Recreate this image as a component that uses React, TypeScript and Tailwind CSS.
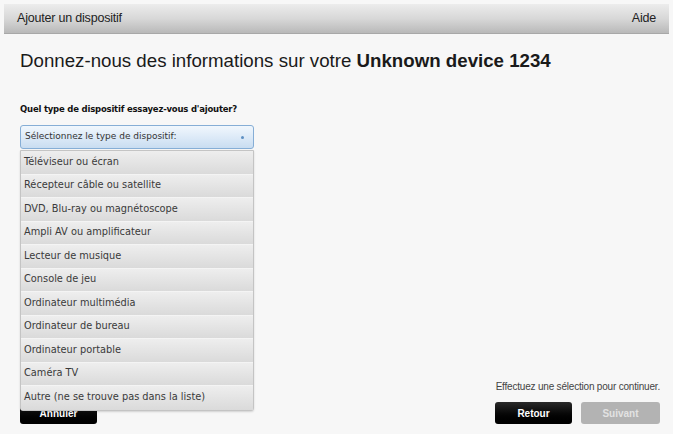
import React from "react";

const items = [
  "Téléviseur ou écran",
  "Récepteur câble ou satellite",
  "DVD, Blu-ray ou magnétoscope",
  "Ampli AV ou amplificateur",
  "Lecteur de musique",
  "Console de jeu",
  "Ordinateur multimédia",
  "Ordinateur de bureau",
  "Ordinateur portable",
  "Caméra TV",
  "Autre (ne se trouve pas dans la liste)",
];

export default function App() {
  return (
    <div className="w-[673px] h-[434px] bg-[#f7f7f7] flex flex-col font-['Liberation_Sans',Arial,sans-serif] text-[#222] overflow-hidden">
      <div className="mx-[4px] mt-[4px] h-[30px] flex items-center justify-between pl-[13px] pr-[13px] bg-gradient-to-b from-[#ececec] via-[#d8d8d8] to-[#b9b9b9] border-b border-[#a8a8a8] text-[12.5px] text-[#222] tracking-[-0.2px]">
        <span>Ajouter un dispositif</span>
        <span>Aide</span>
      </div>
      <div className="flex-1 flex flex-col px-[20px] relative">
        <h1 className="mt-[15px] text-[18.7px] leading-[23px] text-[#1a1a1a]">
          Donnez-nous des informations sur votre <span className="font-bold">Unknown device 1234</span>
        </h1>
        <div className="mt-[31px] text-[8.5px] leading-[12px] font-bold text-[#111] font-['DejaVu_Sans',sans-serif] tracking-[-0.2px]">
          Quel type de dispositif essayez-vous d'ajouter?
        </div>
        <div className="relative mt-[10px] w-[234px]">
          <div className="h-[24px] rounded-[3px] border border-[#86aed6] bg-gradient-to-b from-[#f1f7fd] to-[#c9ddf1] flex items-center justify-between pl-[4px] pr-[9px] font-['DejaVu_Sans',sans-serif] text-[9px] text-[#333]">
            <span>Sélectionnez le type de dispositif:</span>
            <span className="w-[3px] h-[3px] bg-[#5d8fc2] rounded-full"></span>
          </div>
          <div className="absolute left-0 top-[25px] w-[234px] z-10 border border-[#c4c4c4] rounded-b-[3px] bg-[#e4e4e4] shadow-[0_1px_2px_rgba(0,0,0,0.15)] flex flex-col">
            {items.map((t) => (
              <div
                key={t}
                className="h-[23.5px] flex items-center pl-[3px] border-b border-[#f4f4f4] last:border-b-0 bg-gradient-to-b from-[#eeeeee] to-[#dadada] font-['DejaVu_Sans',sans-serif] text-[9.8px] text-[#3a3a3a]"
              >
                {t}
              </div>
            ))}
          </div>
        </div>
        <div className="flex-1"></div>
        <div className="flex items-end justify-between pb-[10px] mr-[-7px]">
          <button className="w-[77px] h-[22px] rounded-[3px] bg-gradient-to-b from-[#2a2a2a] to-[#000] text-white text-[10px] font-bold">
            Annuler
          </button>
          <div className="flex flex-col items-end">
            <div className="text-[10px] tracking-[-0.2px] text-[#444] mb-[8px]">Effectuez une sélection pour continuer.</div>
            <div className="flex gap-[9px]">
              <button className="w-[77px] h-[22px] rounded-[3px] bg-gradient-to-b from-[#2a2a2a] to-[#000] text-white text-[10px] font-bold">
                Retour
              </button>
              <button className="w-[79px] h-[22px] rounded-[3px] bg-[#b3b3b3] text-[#e2e2e2] text-[10px] font-bold">
                Suivant
              </button>
            </div>
          </div>
        </div>
      </div>
    </div>
  );
}
